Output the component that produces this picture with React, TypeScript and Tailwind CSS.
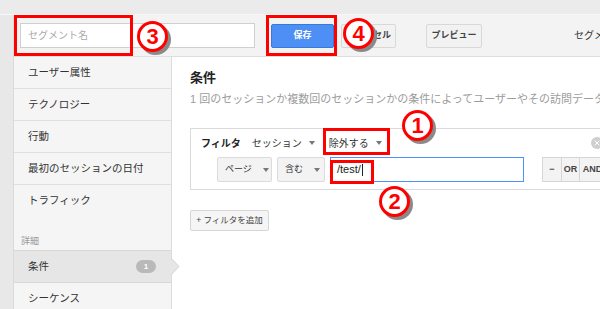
import { X } from 'lucide-react';

const sideItems = ['ユーザー属性', 'テクノロジー', '行動', '最初のセッションの日付'];

function Caret({ gap = 'ml-[7px]' }: { gap?: string }) {
  return <span className={`${gap} inline-block w-0 h-0 border-l-[3px] border-r-[3px] border-t-[4px] border-l-transparent border-r-transparent border-t-[#777]`} />;
}

function Mark({ n, className }: { n: string; className: string }) {
  return (
    <div
      className={`absolute w-[31px] h-[31px] rounded-full bg-white border-[3px] border-[#ff0000] shadow-[3px_3px_0_#8a8a8a] flex items-center justify-center text-[#ff0000] text-[22px] font-black leading-none ${className}`}
    >
      {n}
    </div>
  );
}

export default function App() {
  return (
    <div className="relative w-[600px] h-[309px] overflow-hidden bg-white text-[#333] font-['Liberation_Sans','Noto_Sans_CJK_JP',sans-serif]">
      {/* top strip */}
      <div className="h-[15px] bg-[#ebebeb] border-b border-[#f7f7f7]" />

      <div className="flex">
        <div className="w-[14px] shrink-0 bg-[#e8e8e8] border-r border-[#dadada] h-[294px]" />

        <div className="flex-1 flex flex-col">
          {/* toolbar */}
          <div className="h-[42px] bg-[#f3f3f3] border-b border-[#dedede] flex items-center pl-[6px]">
            <div className="w-[235px] h-[25px] shrink-0 bg-white border border-[#cfcfcf] flex items-center pl-[7px] text-[10px] text-[#aaa]">
              セグメント名
            </div>
            <button className="ml-[16px] w-[63px] h-[24px] shrink-0 rounded-[2px] bg-[#4d8ff5] border border-[#3a78dc] text-white text-[9px] font-bold">
              保存
            </button>
            <button className="ml-[7px] w-[55px] h-[24px] shrink-0 rounded-[2px] bg-[#f2f2f2] border border-[#d8d8d8] text-[9px] font-bold text-[#444]">
              キャンセル
            </button>
            <button className="ml-[30px] w-[56px] h-[24px] shrink-0 rounded-[2px] bg-[#f2f2f2] border border-[#d8d8d8] text-[9px] font-bold text-[#444]">
              プレビュー
            </button>
            <span className="ml-[92px] text-[10px] whitespace-nowrap text-[#333]">セグメント</span>
          </div>

          <div className="flex">
            {/* sidebar */}
            <div className="w-[158px] shrink-0 bg-[#f5f5f5] border-r border-[#dcdcdc] h-[252px] text-[10.5px]">
              {sideItems.map((s) => (
                <div key={s} className="h-[32px] border-b border-[#dedede] flex items-center pl-[14px]">
                  {s}
                </div>
              ))}
              <div className="h-[32px] flex items-center pl-[14px]">トラフィック</div>
              <div className="h-[33px] pt-[18px] pl-[7px] text-[9px] text-[#999] leading-[12px]">詳細</div>
              <div className="relative h-[33px] bg-[#e6e6e6] border-y border-[#d8d8d8] flex items-center pl-[14px]">
                条件
                <span className="ml-auto mr-[15px] w-[20px] h-[13px] rounded-full bg-[#b9b9b9] text-white text-[8px] font-bold flex items-center justify-center">
                  1
                </span>
                <svg className="absolute right-[-9px] top-[7px]" width="9" height="17" viewBox="0 0 9 17">
                  <path d="M0 0 L8 8.5 L0 17 Z" fill="#e6e6e6" />
                  <path d="M0 0 L8 8.5 L0 17" fill="none" stroke="#d3d3d3" />
                </svg>
              </div>
              <div className="h-[32px] flex items-center pl-[14px]">シーケンス</div>
            </div>

            {/* main */}
            <div className="flex-1 min-w-0 pl-[18px] pt-[13px]">
              <h2 className="text-[13px] font-bold leading-[16px] text-[#222]">条件</h2>
              <p className="mt-[6px] text-[11px] leading-[14px] text-[#9c9c9c] whitespace-nowrap">
                1 回のセッションか複数回のセッションかの条件によってユーザーやその訪問データを絞り込みます
              </p>

              <div className="mt-[22px] w-[420px] h-[62px] border border-[#dadada] pt-[2px] px-[10px]">
                <div className="h-[24px] flex items-center text-[10px]">
                  <span className="font-bold text-[#222]">フィルタ</span>
                  <span className="ml-[11px]">セッション</span>
                  <Caret />
                  <span className="ml-[14px]">除外する</span>
                  <Caret />
                  <span className="ml-auto mr-[-4px] w-[12px] h-[12px] rounded-full bg-[#cfcfcf] flex items-center justify-center">
                    <X size={8} color="#fff" strokeWidth={3} />
                  </span>
                </div>
                <div className="mt-[2px] ml-[16px] h-[25px] flex items-center text-[9px]">
                  <div className="w-[55px] h-[25px] shrink-0 bg-[#f3f3f3] border border-[#dcdcdc] rounded-[2px] flex items-center pl-[7px]">
                    ページ
                    <Caret gap="ml-[11px]" />
                  </div>
                  <div className="ml-[5px] w-[48px] h-[25px] shrink-0 bg-[#f3f3f3] border border-[#dcdcdc] rounded-[2px] flex items-center pl-[7px]">
                    含む
                    <Caret gap="ml-[11px]" />
                  </div>
                  <div className="ml-[5px] w-[194px] h-[25px] shrink-0 bg-white border border-[#4d90fe] flex items-center pl-[6px] text-[11px] text-[#222]">
                    /test/
                    <span className="ml-px w-px h-[12px] bg-[#222]" />
                  </div>
                  <div className="ml-[18px] flex shrink-0 h-[25px] text-[9px] font-bold text-[#444]">
                    <div className="w-[20px] bg-[#f3f3f3] border border-[#d6d6d6] flex items-center justify-center">−</div>
                    <div className="w-[18px] bg-[#f3f3f3] border-y border-r border-[#d6d6d6] flex items-center justify-center">OR</div>
                    <div className="w-[26px] bg-[#f3f3f3] border-y border-r border-[#d6d6d6] flex items-center justify-center">AND</div>
                  </div>
                </div>
              </div>

              <button className="mt-[20px] w-[79px] h-[21px] bg-[#f5f5f5] border border-[#d6d6d6] rounded-[2px] text-[8.5px] text-[#444] flex items-center justify-center">
                + フィルタを追加
              </button>
            </div>
          </div>
        </div>
      </div>

      {/* annotations */}
      <div className="absolute left-[14px] top-[15px] w-[119px] h-[41px] border-[3px] border-[#ff0000]" />
      <Mark n="3" className="left-[137px] top-[21px]" />
      <div className="absolute left-[266px] top-[15px] w-[71px] h-[41px] border-[3px] border-[#ff0000]" />
      <Mark n="4" className="left-[343px] top-[18px]" />
      <div className="absolute left-[323px] top-[128px] w-[67px] h-[27px] border-[3px] border-[#ff0000]" />
      <Mark n="1" className="left-[402px] top-[110px]" />
      <div className="absolute left-[330px] top-[160px] w-[44px] h-[24px] border-[3px] border-[#ff0000]" />
      <Mark n="2" className="left-[379px] top-[186px]" />
    </div>
  );
}
